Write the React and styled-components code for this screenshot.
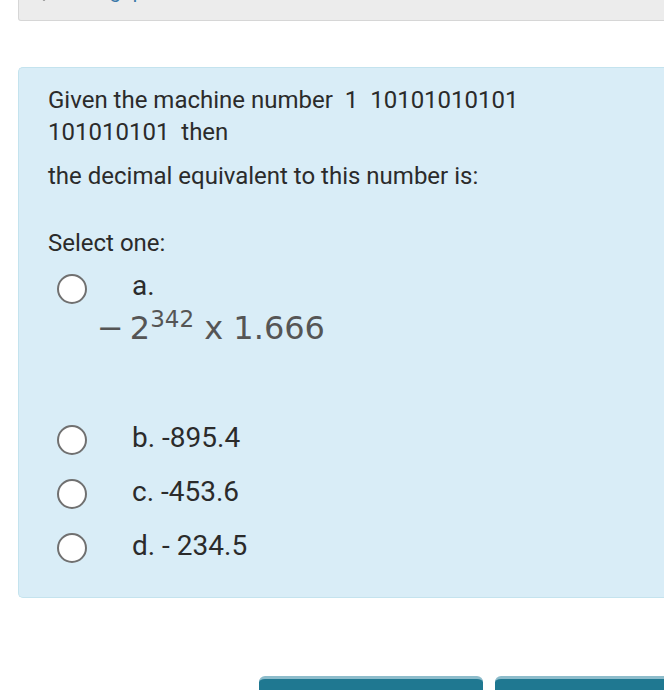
import React from 'react';
import styled, { createGlobalStyle } from 'styled-components';

const GlobalStyle = createGlobalStyle`
  html, body, #root {
    margin: 0;
    padding: 0;
    background: #ffffff;
    overflow: hidden;
  }
  body {
    width: 664px;
    height: 690px;
    font-family: Roboto, "Liberation Sans", sans-serif;
    color: #333333;
  }
`

const Page = styled.div`
  padding-left: 18px;
  width: 700px;
`

const InfoBar = styled.div`
  height: 20px;
  margin-bottom: 46px;
  background: #ececec;
  border: 1px solid #d6d6d6;
  border-top: none;
  border-bottom-left-radius: 3px;
  overflow: hidden;
`

const FlagLine = styled.div`
  display: flex;
  align-items: flex-end;
  margin-top: -19px;
  padding-left: 22px;
  font-size: 20px;
  line-height: 20px;
  color: #3b79a8;
  height: 20px;
`

const QuestionBox = styled.div`
  background: #d9edf7;
  border: 1px solid #c4e3ee;
  border-right: none;
  border-radius: 5px 0 0 5px;
  padding: 16px 0 0 29px;
  height: 531px;
  box-sizing: border-box;
`

const Para = styled.p`
  margin: ${p => p.top || 0}px 0 0;
  font-size: 24px;
  line-height: 32px;
  color: #2b2b2b;
  white-space: pre;
`

const Prompt = styled.div`
  margin-top: 35px;
  font-size: 24px;
  line-height: 32px;
  color: #2b2b2b;
`

const Options = styled.div`
  display: flex;
  flex-direction: column;
  margin-top: 15px;
`

const OptionRow = styled.div`
  display: flex;
  align-items: center;
  height: 30px;
  margin-top: ${p => p.top || 0}px;
`

const Radio = styled.span`
  width: 26px;
  height: 26px;
  margin-left: 9px;
  border: 2px solid #707070;
  border-radius: 50%;
  background: #ffffff;
  flex-shrink: 0;
`

const Label = styled.span`
  margin-left: 45px;
  font-size: 28px;
  line-height: 30px;
  color: #2b2b2b;
  position: relative;
  top: ${p => p.shift || 0}px;
`

const MathLine = styled.div`
  padding-left: 49px;
  margin-top: 8px;
  font-family: "DejaVu Sans", Verdana, sans-serif;
  font-size: 32px;
  line-height: 32px;
  color: #555555;
  white-space: nowrap;
`

const Minus = styled.span`
  margin-right: 6px;
`

const Sup = styled.sup`
  font-size: 23px;
  vertical-align: 12px;
  line-height: 0;
`

const ButtonRow = styled.div`
  display: flex;
  gap: 12px;
  padding-left: 241px;
  margin-top: 78px;
`

const NavButton = styled.div`
  width: 225px;
  height: 30px;
  background: #1f7891;
  border-top: 3px solid #8dbccb;
  border-radius: 6px 6px 0 0;
`

function Flag() {
  return (
    <svg width="14" height="22" viewBox="0 0 14 22">
      <path d="M3 0 L3 20" stroke="#555" strokeWidth="3" strokeLinecap="round" />
    </svg>
  );
}

export default function App() {
  return (
    <Page>
      <GlobalStyle />
      <InfoBar>
        <FlagLine>
          <Flag />
          <span style={{ marginLeft: 28 }}>Flag question</span>
        </FlagLine>
      </InfoBar>
      <QuestionBox>
        <Para>{'Given the machine number  1  10101010101\n101010101  then'}</Para>
        <Para top={12}>the decimal equivalent to this number is:</Para>
        <Prompt>Select one:</Prompt>
        <Options>
          <OptionRow>
            <Radio />
            <Label shift={-3}>a.</Label>
          </OptionRow>
          <MathLine>
            <Minus>−</Minus>2<Sup>342</Sup> x 1.666
          </MathLine>
          <OptionRow top={81}>
            <Radio />
            <Label shift={-2}>b. -895.4</Label>
          </OptionRow>
          <OptionRow top={24}>
            <Radio />
            <Label shift={-2}>c. -453.6</Label>
          </OptionRow>
          <OptionRow top={24}>
            <Radio />
            <Label shift={-2}>d. - 234.5</Label>
          </OptionRow>
        </Options>
      </QuestionBox>
      <ButtonRow>
        <NavButton />
        <NavButton />
      </ButtonRow>
    </Page>
  );
}
